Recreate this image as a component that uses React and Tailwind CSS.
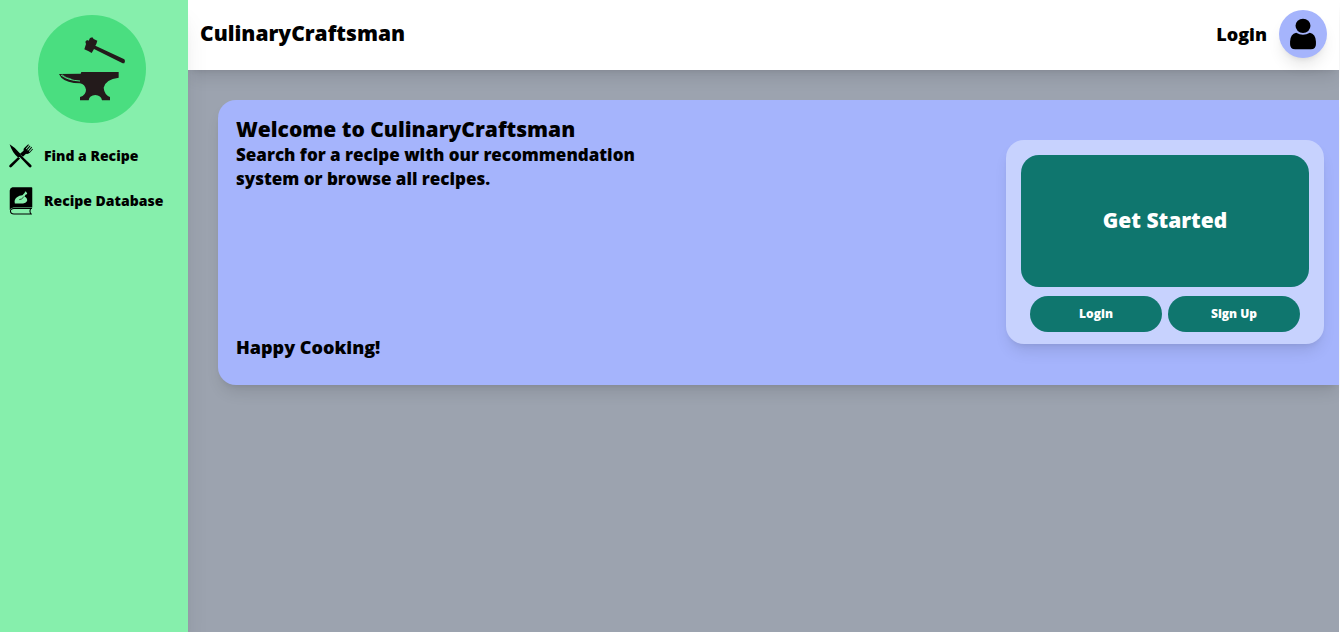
function AnvilLogo() {
  return (
    <svg viewBox="24 21 324 324" className="size-27" role="img" aria-label="CulinaryCraftsman logo">
      <circle cx="186" cy="183" r="162" fill="#4ade80" />
      <g fill="#231a1b">
        <path d="M180 90 L187 88 L191 93 L202 98 L199 108 L196 113 L283 154 Q288 161 283 166 L278 166 L192 123 L185 135 L176 130 L163 124 L168 108 L166 101 L171 96 L176 98 Z" />
        <path d="M87 198 L152 197 L154 192 L266 192 L266 209 Q226 214 221 239 Q223 260 240 267 L240 277 L216 277 Q213 262 196 261 Q178 262 176 277 L150 277 L150 267 Q168 261 168 245 Q165 229 150 226 Q110 225 94 209 Z" />
      </g>
      <path d="M93 201 Q113 217 150 219" fill="none" stroke="#4ade80" strokeWidth="3" />
      <path d="M96 200 Q108 211 124 213" fill="none" stroke="#4ade80" strokeWidth="2" />
    </svg>
  );
}

function KnifeForkIcon() {
  return (
    <svg viewBox="26 25 76 76" className="size-6 shrink-0" aria-hidden="true">
      <path d="M28 26 Q44 35 61 55 L64 61 L97 92 Q99 97 95 99 Q91 100 89 97 L60 66 L54 67 Q36 52 28 26 Z" />
      <path d="M60 57 L72 46 Q71 39 76 36 L87 26 L89 28 L79 40 L81 42 L92 30 L94 32 L84 44 L86 46 L97 34 L99 36 L89 48 L91 50 L100 40 L102 42 L92 53 Q87 58 80 56 L70 65 Z" />
      <path d="M55 66 L61 71 L35 97 Q31 101 28 98 Q25 95 29 91 Z" />
    </svg>
  );
}

function RecipeBookIcon() {
  return (
    <svg viewBox="31 155 70 82" className="h-7 w-6 shrink-0" aria-hidden="true">
      <path d="M41 156 H97 Q99 156 99 158 V215 H44 Q36 216 33 222 V165 Q34 157 41 156 Z" />
      <path d="M98 218 H45 Q35 219 35 226 Q36 234 45 234 H98 M94 218 Q90 226 94 234" fill="none" stroke="#000" strokeWidth="3" />
      <path d="M48 203 Q45 192 54 185 Q61 179 70 179 L77 172 Q77 167 81 169 Q82 172 84 173 Q85 177 80 177 L76 183 Q85 187 84 196 Q80 203 72 203 Z" fill="#86efac" />
      <path d="M61 192 Q68 192 74 184" fill="none" stroke="#000" strokeWidth="2" />
    </svg>
  );
}

function UserIcon() {
  return (
    <svg viewBox="269 55 80 94" className="h-8 w-7" aria-hidden="true">
      <ellipse cx="309" cy="78" rx="22" ry="21" />
      <path d="M289 98 Q309 110 329 98 Q346 101 347 124 V132 Q347 147 332 147 H286 Q271 147 271 132 V124 Q272 101 289 98 Z" />
    </svg>
  );
}

export default function App() {
  return (
    <div className="flex min-h-screen overflow-hidden bg-white pr-px font-['Open_Sans','Noto_Sans',sans-serif] font-extrabold text-black">
      <aside className="z-10 flex w-47 shrink-0 flex-col bg-[#86efac] shadow-xl">
        <a href="#home" className="mt-[15px] ml-[38px] self-start rounded-full">
          <AnvilLogo />
        </a>
        <nav className="mt-[10px] flex flex-col text-sm">
          <a href="#find" className="flex h-[45px] items-center gap-[11px] pl-[9px]">
            <KnifeForkIcon />
            Find a Recipe
          </a>
          <a href="#database" className="flex h-[45px] items-center gap-[11px] pl-[9px]">
            <RecipeBookIcon />
            Recipe Database
          </a>
        </nav>
      </aside>

      <div className="flex min-w-0 flex-1 flex-col bg-[#9ca3af]">
        <header className="flex h-[70px] items-center justify-between bg-white px-3 pb-[2px] shadow-lg">
          <h1 className="text-[21px]">CulinaryCraftsman</h1>
          <a href="#login" className="flex items-center gap-3 text-lg">
            Login
            <span className="flex size-12 items-center justify-center rounded-full bg-[#a5b4fc] shadow-lg">
              <UserIcon />
            </span>
          </a>
        </header>

        <main className="pt-[30px] pl-[30px]">
          <section className="flex items-start justify-between rounded-l-[18px] bg-[#a5b4fc] pr-[15px] pl-[18px] shadow-lg">
            <div className="flex h-[285px] w-[440px] flex-col pt-4 pb-[26px] text-[17px] leading-6">
              <h2 className="text-[21px] leading-[27px]">Welcome to CulinaryCraftsman</h2>
              <p>Search for a recipe with our recommendation system or browse all recipes.</p>
              <p className="mt-auto text-lg leading-6">Happy Cooking!</p>
            </div>
            <div className="mt-10 flex w-[318px] flex-col rounded-[18px] bg-[#c7d2fe] px-[15px] pt-[15px] pb-3 text-white shadow-lg">
              <button type="button" className="h-[132px] rounded-[18px] bg-[#0f766e] text-[21px]">
                Get Started
              </button>
              <div className="mt-[9px] grid grid-cols-2 gap-[6px] px-[9px] text-xs">
                <button type="button" className="h-9 rounded-full bg-[#0f766e]">Login</button>
                <button type="button" className="h-9 rounded-full bg-[#0f766e]">Sign Up</button>
              </div>
            </div>
          </section>
        </main>
      </div>
    </div>
  );
}
